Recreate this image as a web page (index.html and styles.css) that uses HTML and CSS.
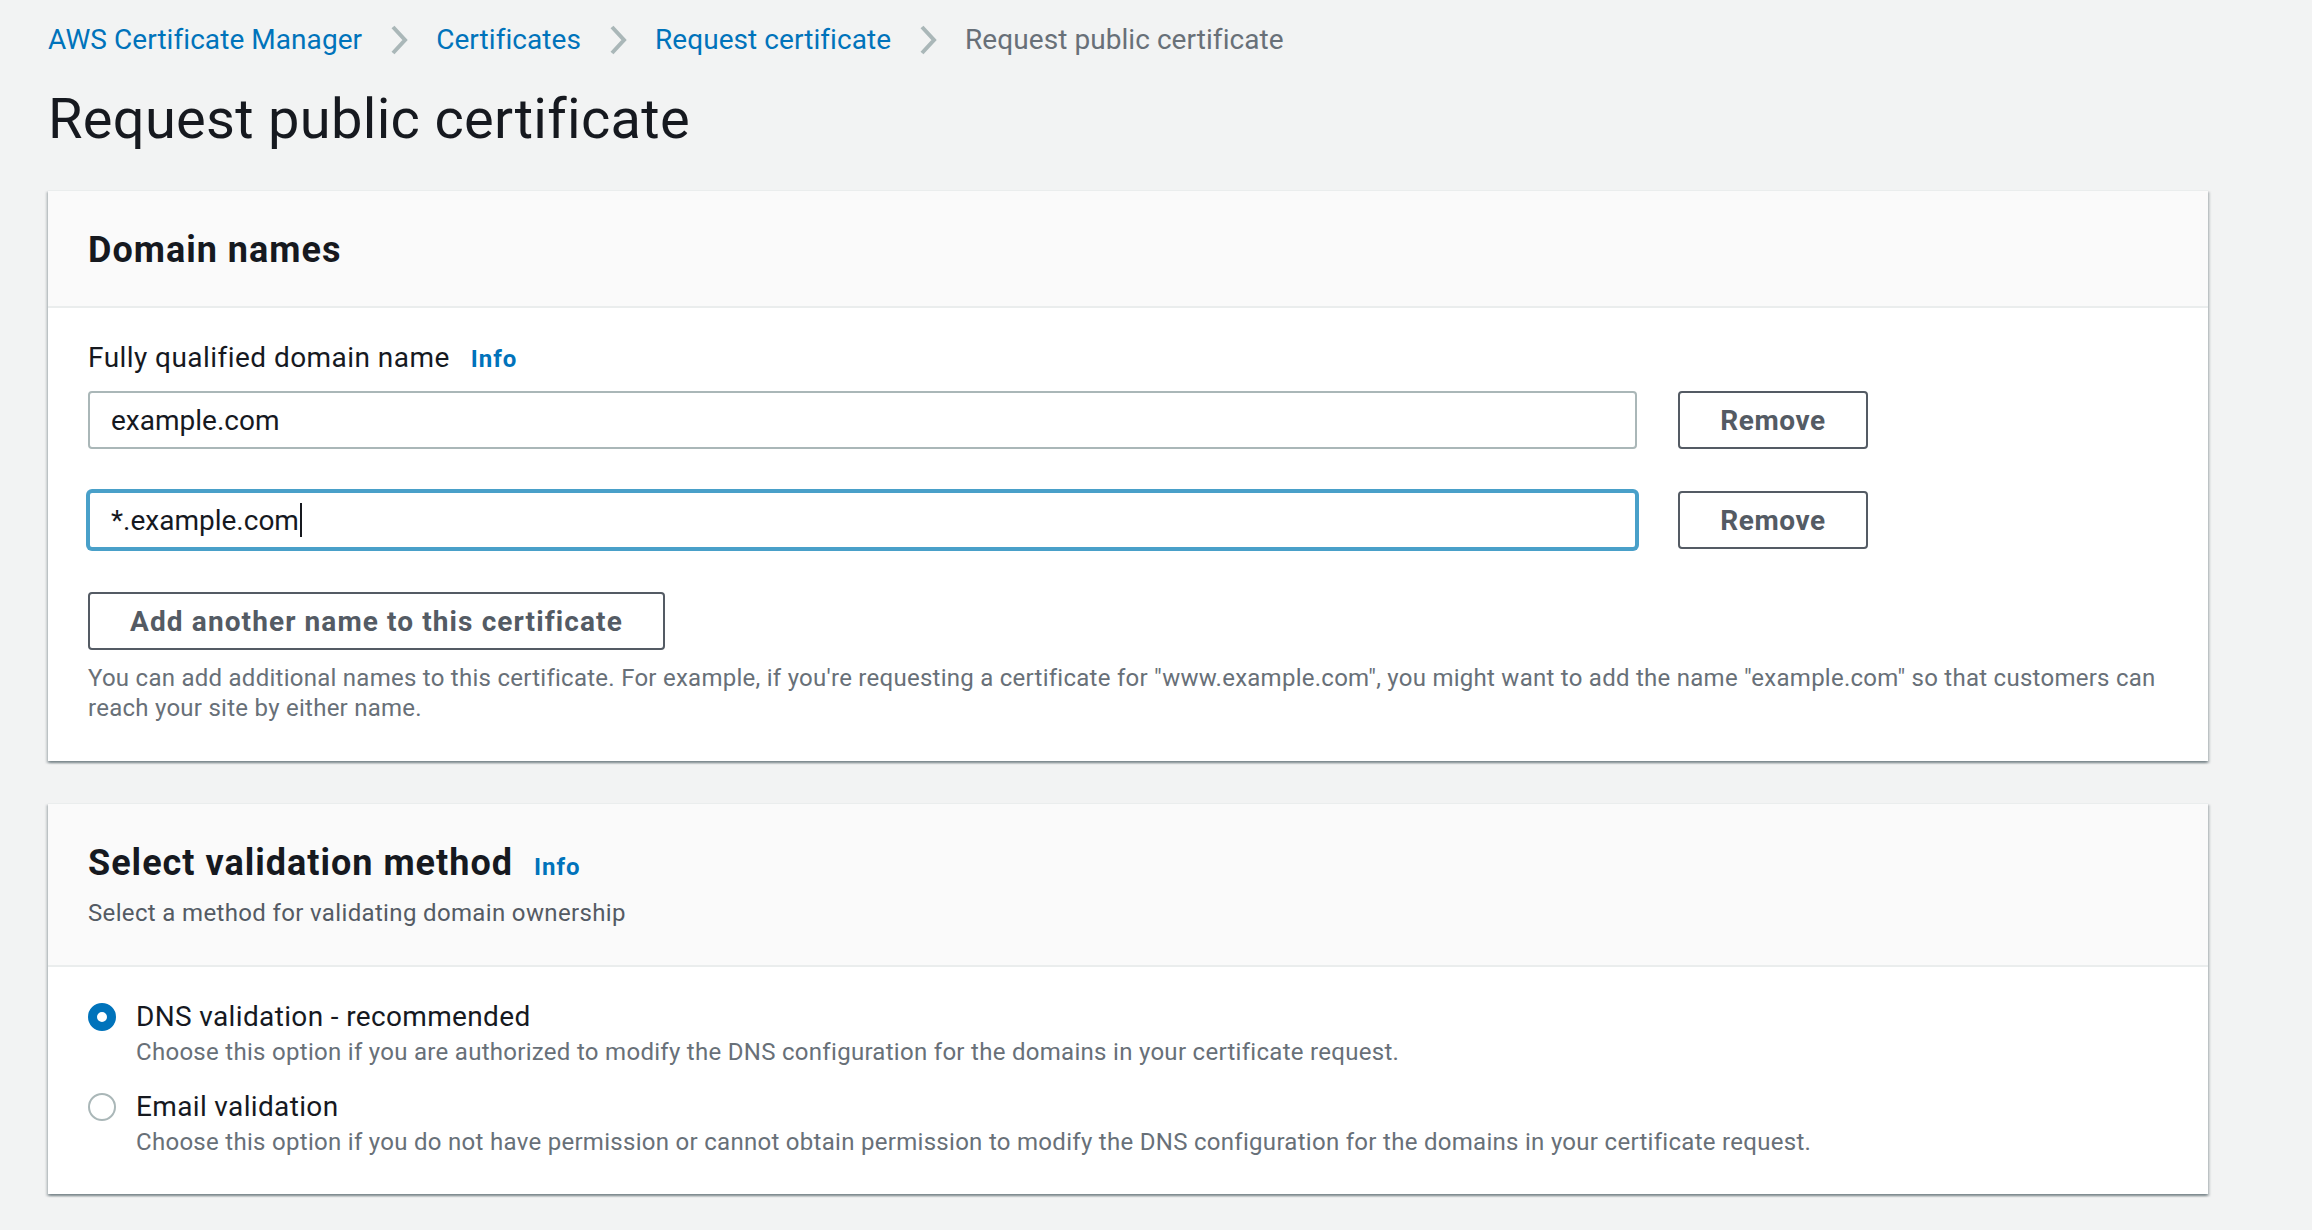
FILE: index.html
```html
<!DOCTYPE html>
<html lang="en">
<head>
<meta charset="utf-8">
<title>Request public certificate</title>
<link rel="stylesheet" href="styles.css">
</head>
<body>
<div class="page">
  <nav class="breadcrumbs">
    <a class="crumb-link" href="#">AWS Certificate Manager</a>
    <svg class="chev" width="18" height="30" viewBox="0 0 18 30"><polyline points="3,2 15,15 3,28" fill="none" stroke="#aab7b8" stroke-width="4"/></svg>
    <a class="crumb-link" href="#">Certificates</a>
    <svg class="chev" width="18" height="30" viewBox="0 0 18 30"><polyline points="3,2 15,15 3,28" fill="none" stroke="#aab7b8" stroke-width="4"/></svg>
    <a class="crumb-link" href="#">Request certificate</a>
    <svg class="chev" width="18" height="30" viewBox="0 0 18 30"><polyline points="3,2 15,15 3,28" fill="none" stroke="#aab7b8" stroke-width="4"/></svg>
    <span class="crumb-current">Request public certificate</span>
  </nav>

  <h1 class="page-title">Request public certificate</h1>

  <section class="card">
    <div class="card-header">
      <h2 class="card-title">Domain names</h2>
    </div>
    <div class="card-body domains-body">
      <div class="field-label">Fully qualified domain name<a class="info" href="#">Info</a></div>
      <div class="domain-row">
        <div class="input"><span class="input-text">example.com</span></div>
        <button class="btn btn-remove">Remove</button>
      </div>
      <div class="domain-row second">
        <div class="input focused"><span class="input-text">*.example.com</span><span class="caret"></span></div>
        <button class="btn btn-remove">Remove</button>
      </div>
      <button class="btn btn-add">Add another name to this certificate</button>
      <p class="help">You can add additional names to this certificate. For example, if you're requesting a certificate for "www.example.com", you might want to add the name "example.com" so that customers can reach your site by either name.</p>
    </div>
  </section>

  <section class="card card-two">
    <div class="card-header header-two">
      <h2 class="card-title">Select validation method<a class="info" href="#">Info</a></h2>
      <p class="header-desc">Select a method for validating domain ownership</p>
    </div>
    <div class="card-body radios-body">
      <div class="radio-option">
        <span class="radio checked"></span>
        <div class="radio-text">
          <div class="radio-label">DNS validation - recommended</div>
          <div class="radio-desc">Choose this option if you are authorized to modify the DNS configuration for the domains in your certificate request.</div>
        </div>
      </div>
      <div class="radio-option option-two">
        <span class="radio"></span>
        <div class="radio-text">
          <div class="radio-label">Email validation</div>
          <div class="radio-desc">Choose this option if you do not have permission or cannot obtain permission to modify the DNS configuration for the domains in your certificate request.</div>
        </div>
      </div>
    </div>
  </section>
</div>
</body>
</html>
```

FILE: styles.css
```css
* { box-sizing: border-box; }

html, body {
  margin: 0;
  padding: 0;
  background: #f2f3f3;
}

body {
  font-family: Roboto, "Noto Sans", "Liberation Sans", Arial, sans-serif;
  color: #16191f;
  letter-spacing: 0.35px;
}

.page {
  width: 2208px;
  padding: 20px 0 40px 48px;
}

.breadcrumbs {
  display: flex;
  align-items: center;
  height: 40px;
  font-size: 28px;
  line-height: 40px;
  letter-spacing: 0.06px;
}

.crumb-link {
  color: #0073bb;
  text-decoration: none;
}

.crumb-current {
  color: #687078;
}

.chev {
  display: block;
  margin: 0 28px;
}

.page-title {
  margin: 27px 0 39px;
  font-size: 56px;
  line-height: 64px;
  font-weight: 400;
  color: #16191f;
  letter-spacing: 0.3px;
}

.card {
  background: #ffffff;
  border-top: 1px solid #eaeded;
  box-shadow: 0 2px 2px 0 rgba(0, 28, 36, 0.3), 2px 2px 2px 0 rgba(0, 28, 36, 0.15), -2px 2px 2px 0 rgba(0, 28, 36, 0.15);
}

.card-two {
  margin-top: 42px;
}

.card-header {
  background: #fafafa;
  padding: 35px 40px 32px;
  border-bottom: 2px solid #eaeded;
}

.header-two {
  padding-bottom: 37px;
}

.card-title {
  margin: 0;
  font-size: 36px;
  line-height: 48px;
  font-weight: 700;
  color: #16191f;
  letter-spacing: 1px;
}

.card-title .info {
  margin-left: 21px;
}

.header-desc {
  margin: 7px 0 0;
  font-size: 24px;
  line-height: 30px;
  color: #545b64;
}

.card-body {
  padding: 30px 40px 38px;
}

.radios-body {
  padding-bottom: 37px;
}

.field-label {
  font-size: 28px;
  line-height: 40px;
  color: #16191f;
  margin-bottom: 12px;
  letter-spacing: 0.45px;
}

.info {
  color: #0073bb;
  font-size: 24px;
  font-weight: 700;
  text-decoration: none;
  margin-left: 21px;
  letter-spacing: 1px;
}

.domain-row {
  display: flex;
  align-items: center;
  gap: 41px;
}

.domain-row.second {
  margin-top: 42px;
}

.input {
  width: 1549px;
  height: 58px;
  display: flex;
  align-items: center;
  padding: 0 21px;
  border: 2px solid #aab7b8;
  border-radius: 4px;
  background: #ffffff;
  font-size: 28px;
  color: #16191f;
  letter-spacing: 0;
}

.input.focused {
  border-color: #49a0c9;
  box-shadow: 0 0 0 2px #49a0c9;
}

.caret {
  display: inline-block;
  width: 2px;
  height: 34px;
  margin-left: 1px;
  background: #16191f;
}

.btn {
  font-family: inherit;
  font-size: 28px;
  font-weight: 700;
  letter-spacing: 1.1px;
  color: #545b64;
  background: #ffffff;
  border: 2px solid #545b64;
  border-radius: 4px;
  height: 58px;
  padding: 0 40px;
  cursor: pointer;
}

.btn-remove {
  width: 190px;
  padding: 0;
  letter-spacing: 0.6px;
}

.btn-add {
  display: block;
  width: 577px;
  padding: 0;
  margin-top: 43px;
}

.help {
  margin: 13px 0 0;
  font-size: 24px;
  line-height: 30px;
  color: #687078;
  letter-spacing: 0.26px;
}

.radio-option {
  display: flex;
  align-items: flex-start;
  gap: 20px;
}

.option-two {
  margin-top: 20px;
}

.radio {
  flex: 0 0 28px;
  width: 28px;
  height: 28px;
  margin-top: 6px;
  border-radius: 50%;
  border: 2px solid #aab7b8;
  background: #ffffff;
}

.radio.checked {
  border: 9px solid #0073bb;
}

.radio-label {
  font-size: 28px;
  line-height: 40px;
  color: #16191f;
}

.radio-desc {
  font-size: 24px;
  line-height: 30px;
  color: #687078;
  letter-spacing: 0.29px;
}
```
